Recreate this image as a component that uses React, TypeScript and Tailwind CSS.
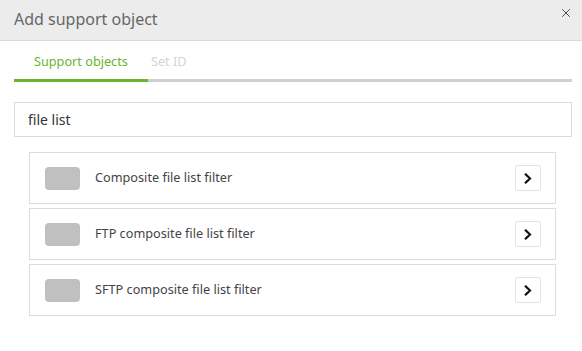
import { X } from "lucide-react";

const items = ["Composite file list filter", "FTP composite file list filter", "SFTP composite file list filter"];

const Chevron = () => (
  <svg width="8" height="11" viewBox="0 0 8 11" fill="none">
    <path d="M1.8 1.5 L6 5.5 L1.8 9.5" stroke="#111" strokeWidth="2.2" strokeLinecap="square" />
  </svg>
);

export default function App() {
  return (
    <div className="w-[582px] h-[351px] bg-white font-['Noto_Sans',sans-serif] overflow-hidden">
      <div className="h-[41px] bg-[#ececec] border-b border-[#d9d9d9] flex items-center justify-between pl-[14px] pr-[9px]">
        <h2 className="text-[16px] text-[#666] pb-[3px]">Add support object</h2>
        <button className="text-[#444] -mt-[15px]">
          <X size={14} strokeWidth={1.6} />
        </button>
      </div>

      <div className="mx-[14px] mt-[11px] w-[558px] flex border-b-[3px] border-[#cfcfd2]">
        <div className="w-[134px] pl-[20px] -mb-[3px] border-b-[3px] border-[#6ab42f] pb-[9px] text-[12.7px] leading-[18px] text-[#6ab42f]">
          Support objects
        </div>
        <div className="pl-[3px] pb-[9px] text-[12.7px] leading-[18px] text-[#d4d4d4]">Set ID</div>
      </div>

      <div className="mx-[14px] mt-[20px] w-[558px] h-[35px] border border-[#dadada] flex items-center pl-[13px] text-[14px] text-[#333]">
        file list
      </div>

      <div className="ml-[29px] mt-[15px] w-[527px] flex flex-col gap-[4px]">
        {items.map(item => (
          <div key={item} className="h-[52px] border border-[#dcdcdc] flex items-center pl-[15px] pr-[14px]">
            <div className="w-[35px] h-[23px] rounded-[4px] bg-[#c0c0c0]" />
            <span className="ml-[15px] text-[12.7px] text-[#444] flex-1">{item}</span>
            <button className="w-[26px] h-[26px] border border-[#e2e2e2] rounded-[2px] flex items-center justify-center">
              <Chevron />
            </button>
          </div>
        ))}
      </div>
    </div>
  );
}
